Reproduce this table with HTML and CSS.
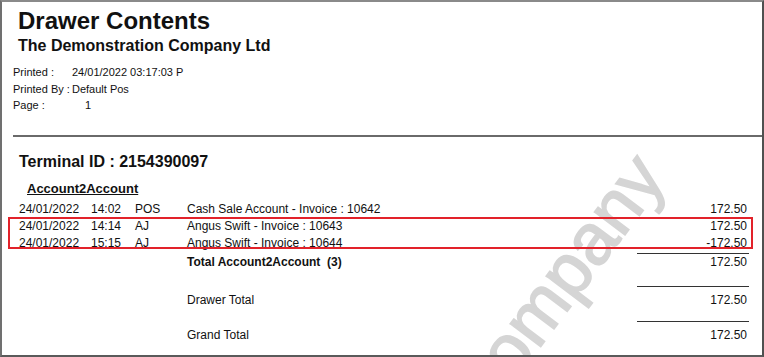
FILE: index.html
```html
<!DOCTYPE html>
<html>
<head>
<meta charset="utf-8">
<link rel="stylesheet" href="styles.css">
</head>
<body>
<div class="page">
  <div class="watermark">Company</div>
  <h1 class="title">Drawer Contents</h1>
  <h2 class="company">The Demonstration Company Ltd</h2>
  <div class="info">
    <span class="info-label">Printed :</span><span>24/01/2022 03:17:03 P</span>
    <span class="info-label">Printed By :</span><span>Default Pos</span>
    <span class="info-label">Page :</span><span class="page-num">1</span>
  </div>
  <div class="rule-full"></div>
  <div class="content">
    <h3 class="terminal">Terminal ID : 2154390097</h3>
    <h4 class="group">Account2Account</h4>
    <div class="row">
      <span>24/01/2022</span><span>14:02</span><span>POS</span><span>Cash Sale Account - Invoice : 10642</span><span class="amt">172.50</span>
    </div>
    <div class="highlight">
      <div class="row">
        <span>24/01/2022</span><span>14:14</span><span>AJ</span><span>Angus Swift - Invoice : 10643</span><span class="amt">172.50</span>
      </div>
      <div class="row">
        <span>24/01/2022</span><span>15:15</span><span>AJ</span><span>Angus Swift - Invoice : 10644</span><span class="amt">-172.50</span>
      </div>
    </div>
    <div class="sum-rule first"></div>
    <div class="row total">
      <span class="label">Total Account2Account&nbsp;&nbsp;(3)</span><span class="amt">172.50</span>
    </div>
    <div class="sum-rule"></div>
    <div class="row total plain">
      <span class="label">Drawer Total</span><span class="amt">172.50</span>
    </div>
    <div class="sum-rule"></div>
    <div class="row total plain">
      <span class="label">Grand Total</span><span class="amt">172.50</span>
    </div>
  </div>
</div>
</body>
</html>
```
FILE: styles.css
```css
* { box-sizing: border-box; }
html, body { margin: 0; padding: 0; background: #fff; }
body {
  font-family: "Liberation Sans", Arial, sans-serif;
  color: #111;
}
.page {
  position: relative;
  isolation: isolate;
  width: 764px;
  height: 357px;
  overflow: hidden;
  background: #fff;
  border-top: 2px solid #8a8a8a;
  border-left: 2px solid #707070;
  border-right: 2px solid #505050;
  border-bottom: 2px solid #5a5a5a;
}
.watermark {
  position: absolute;
  z-index: -1;
  left: 399px;
  top: 248px;
  width: 308px;
  height: 72px;
  font-size: 72px;
  line-height: 1;
  color: #d5d5d5;
  -webkit-text-stroke: 1.6px #d5d5d5;
  white-space: nowrap;
  transform: rotate(-53deg);
}
.title {
  margin: 5px 0 0 16px;
  font-size: 24px;
  line-height: 28px;
  font-weight: bold;
}
.company {
  margin: 1px 0 0 16px;
  font-size: 16px;
  line-height: 20px;
  font-weight: bold;
}
.info {
  margin: 8px 0 0 11px;
  display: grid;
  grid-template-columns: 59px 1fr;
  font-size: 11px;
  line-height: 16.5px;
}
.page-num { padding-left: 13px; }
.rule-full {
  margin: 21.5px 0 0 11px;
  height: 2px;
  background: #6a6a6a;
}
.content {
  padding: 0 15px 0 17px;
}
.terminal {
  margin: 14.5px 0 0 0;
  font-size: 16px;
  line-height: 20px;
  font-weight: bold;
}
.group {
  margin: 9px 0 0 8px;
  font-size: 13px;
  line-height: 16px;
  font-weight: bold;
  text-decoration: underline;
}
.row {
  display: grid;
  grid-template-columns: 72px 44px 52px 1fr auto;
  font-size: 12px;
  line-height: 17px;
  white-space: nowrap;
}
.group + .row { margin-top: 4px; }
.amt { text-align: right; }
.highlight { position: relative; }
.highlight::after {
  content: "";
  position: absolute;
  left: -11px;
  right: -6px;
  top: -0.5px;
  bottom: 2.5px;
  border: 2px solid #e2222a;
}
.sum-rule {
  width: 112px;
  height: 1px;
  margin: 15.5px -2px 0 auto;
  background: #333;
}
.sum-rule.first { margin-top: 1px; }
.row.total .label {
  grid-column: 4;
  font-weight: bold;
}
.row.total.plain .label { font-weight: normal; }
.row.total .amt { grid-column: 5; }
.sum-rule + .row.total.plain { margin-top: 5.3px; }
.plain + .sum-rule { margin-top: 11.7px; }
```
